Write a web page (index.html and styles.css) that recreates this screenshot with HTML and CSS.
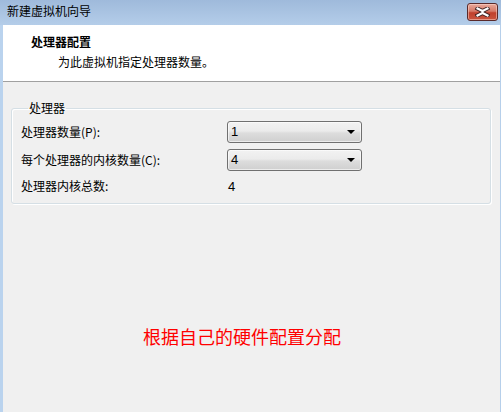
FILE: index.html
```html
<!DOCTYPE html>
<html lang="zh-CN">
<head>
<meta charset="utf-8">
<title>新建虚拟机向导</title>
<link rel="stylesheet" href="styles.css">
</head>
<body>
<div class="window">
  <div class="titlebar">
    <span class="title">新建虚拟机向导</span>
    <button class="close" aria-label="关闭">
      <svg width="17" height="10" viewBox="0 0 17 10">
        <path d="M3.5 1.5 L8.5 4 L13.5 1.5 M3.5 8.5 L8.5 6 L13.5 8.5" fill="none" stroke="#3a2020" stroke-width="4" stroke-linecap="square"/>
        <path d="M3.5 1.5 L8.5 4 L13.5 1.5 M3.5 8.5 L8.5 6 L13.5 8.5 M8.5 4 L8.5 6" fill="none" stroke="#ffffff" stroke-width="2.2" stroke-linecap="square"/>
      </svg>
    </button>
  </div>
  <div class="header">
    <div class="h-title">处理器配置</div>
    <div class="h-sub">为此虚拟机指定处理器数量。</div>
  </div>
  <div class="body">
    <fieldset class="group">
      <legend>处理器</legend>
      <div class="row">
        <span class="label">处理器数量(P):</span>
        <div class="select"><span>1</span><i class="arrow"></i></div>
      </div>
      <div class="row">
        <span class="label">每个处理器的内核数量(C):</span>
        <div class="select"><span>4</span><i class="arrow"></i></div>
      </div>
      <div class="row text-row">
        <span class="label">处理器内核总数:</span>
        <span class="value">4</span>
      </div>
    </fieldset>
    <div class="note">根据自己的硬件配置分配</div>
  </div>
</div>
</body>
</html>
```

FILE: styles.css
```css
* { box-sizing: border-box; }
html, body {
  margin: 0;
  padding: 0;
  width: 501px;
  height: 412px;
  overflow: hidden;
  background: #f0f0f0;
}
body {
  font-family: "Noto Sans CJK SC", "Liberation Sans", sans-serif;
  font-size: 12px;
  color: #000;
}
.window {
  width: 501px;
  height: 412px;
  display: flex;
  flex-direction: column;
  border-left: 3px solid #bad3ee;
  border-right: 1px solid #b6cfea;
  background: #f0f0f0;
}
.titlebar {
  height: 25px;
  flex: none;
  display: flex;
  align-items: center;
  justify-content: space-between;
  background: linear-gradient(#9fbadb, #b4cde9);
  margin-left: -3px;
  margin-right: -1px;
  padding: 0 3px 0 7px;
}
.title {
  line-height: 14px;
  margin-top: -3px;
  color: #000;
}
.close {
  width: 31px;
  height: 18px;
  margin-top: -2px;
  padding: 0;
  border: 1px solid #5a2a2a;
  border-radius: 3px;
  background: linear-gradient(#e9a99b 0%, #d57a68 45%, #c0402c 55%, #c9553f 100%);
  box-shadow: inset 0 0 0 1px rgba(255,220,210,0.5);
  display: flex;
  align-items: center;
  justify-content: center;
}
.header {
  height: 57px;
  flex: none;
  background: #fff;
  border-bottom: 1px solid #a0a0a0;
  padding: 9px 0 0 28px;
}
.h-title {
  font-weight: bold;
  line-height: 16px;
}
.h-sub {
  margin-top: 4px;
  margin-left: 27px;
  line-height: 16px;
}
.body {
  flex: 1;
  padding: 19px 9px 0 8px;
  display: flex;
  flex-direction: column;
}
.group {
  margin: 0;
  padding: 3px 0 5px 9px;
  border: 1px solid #d5dfe5;
  border-radius: 3px;
  box-shadow: 1px 1px 0 #fff inset, 1px 1px 0 #fff;
}
.group legend {
  padding: 0 1px;
  margin-left: 7px;
  line-height: 14px;
}
.row {
  display: flex;
  align-items: center;
  height: 28px;
}
.label {
  width: 206px;
  line-height: 14px;
}
.select {
  width: 135px;
  height: 22px;
  border: 1px solid #707070;
  border-radius: 3px;
  background: linear-gradient(#f2f2f2 0%, #ebebeb 45%, #dddddd 55%, #cfcfcf 100%);
  box-shadow: inset 0 0 0 1px rgba(255,255,255,0.6);
  display: flex;
  align-items: center;
  justify-content: space-between;
  padding: 0 6px 0 3px;
}
.select span {
  line-height: 14px;
  font-family: "Liberation Sans", "Noto Sans CJK SC", sans-serif;
  font-size: 13px;
}
.arrow {
  width: 0;
  height: 0;
  border-left: 4px solid transparent;
  border-right: 4px solid transparent;
  border-top: 4px solid #000;
}
.text-row {
  height: 24px;
}
.value {
  padding-left: 1px;
  font-family: "Liberation Sans", "Noto Sans CJK SC", sans-serif;
  font-size: 13px;
}
.note {
  margin-top: 121px;
  margin-left: 132px;
  color: #ff0000;
  font-size: 18px;
  line-height: 22px;
}
```
